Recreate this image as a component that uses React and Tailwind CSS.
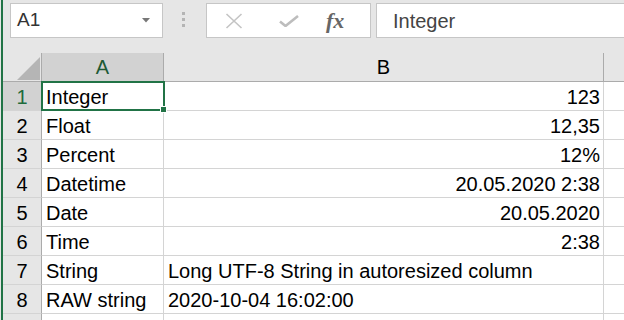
import React from 'react';

const FONT = "font-['Liberation_Sans',Arial,sans-serif]";

const rows = [
  ['1', 'Integer', '123', true],
  ['2', 'Float', '12,35', true],
  ['3', 'Percent', '12%', true],
  ['4', 'Datetime', '20.05.2020 2:38', true],
  ['5', 'Date', '20.05.2020', true],
  ['6', 'Time', '2:38', true],
  ['7', 'String', 'Long UTF-8 String in autoresized column', false],
  ['8', 'RAW string', '2020-10-04 16:02:00', false],
  ['', '', '', false],
];

function Toolbar() {
  return (
    <div className="h-[53px] shrink-0 pt-[3px] flex items-start">
      {/* name box */}
      <div className="ml-[7px] w-[153px] h-[35px] bg-white border border-[#c6c6c6] flex items-center justify-between pl-[6px] pr-[12px]">
        <span className="text-[19px] text-[#333]">A1</span>
        <svg width="8" height="5" viewBox="0 0 8 5">
          <path d="M0 0H8L4 4.5Z" fill="#777" />
        </svg>
      </div>

      {/* grip dots */}
      <div className="ml-[19px] mt-[9px] flex flex-col gap-[3px]">
        <div className="w-[3px] h-[3px] bg-[#b4b4b4]" />
        <div className="w-[3px] h-[3px] bg-[#b4b4b4]" />
        <div className="w-[3px] h-[3px] bg-[#b4b4b4]" />
      </div>

      {/* cancel / enter / fx */}
      <div className="ml-[21px] w-[165px] h-[35px] bg-white border border-[#c6c6c6] flex items-center">
        <svg className="ml-[18px]" width="18" height="16" viewBox="0 0 18 16">
          <path d="M1.5 1 16.5 15M16.5 1 1.5 15" stroke="#c4c4c4" strokeWidth="1.6" />
        </svg>
        <svg className="ml-[36px]" width="20" height="12" viewBox="0 0 20 12">
          <path d="M1 6.5 6.5 11 19 1" stroke="#bdbdbd" strokeWidth="2.6" fill="none" />
        </svg>
        <span className="ml-[27px] font-['Liberation_Serif',serif] italic font-bold text-[22px] text-[#666] leading-none">
          fx
        </span>
      </div>

      {/* formula input */}
      <div className="ml-[5px] flex-1 h-[35px] bg-white border border-[#c6c6c6] border-r-0 flex items-center pl-[16px]">
        <span className="text-[20px] text-[#444]">Integer</span>
      </div>
    </div>
  );
}

export default function App() {
  return (
    <div className={`w-[624px] h-[320px] overflow-hidden bg-[#e6e6e6] flex pl-px ${FONT}`}>
      <div className="w-[2px] h-full shrink-0 bg-[#217346]" />
      <div className="flex-1 flex flex-col">
        <Toolbar />

        <div className="relative shrink-0 grid grid-cols-[39px_122px_440px_1fr] text-[20px] leading-[20px] text-black">
          {/* header row */}
          <div className="h-[29px] border-b border-r border-[#ababab] flex items-end justify-end pr-px pb-px">
            <svg width="23" height="23" viewBox="0 0 23 23">
              <path d="M23 0V23H0Z" fill="#b5b5b5" />
            </svg>
          </div>
          <div className="h-[29px] bg-[#d2d2d2] border-b border-r border-[#ababab] flex items-end justify-center pb-[4px] text-[#1e5a35]">
            A
          </div>
          <div className="h-[29px] border-b border-r border-[#ababab] flex items-end justify-center pb-[4px]">
            B
          </div>
          <div className="h-[29px] border-b border-[#ababab]" />

          {rows.map(([num, label, value, right], i) => (
            <React.Fragment key={i}>
              <div
                className={`h-[29px] border-b border-b-[#d4d4d4] border-r border-r-[#ababab] flex items-end justify-center pb-[3px] ${
                  i === 0 ? 'bg-[#d2d2d2] text-[#1e6b3c]' : ''
                }`}
              >
                {num}
              </div>
              <div className="h-[29px] bg-white border-b border-r border-[#d4d4d4] flex items-end pl-[4px] pb-[3px] whitespace-nowrap">
                {label}
              </div>
              <div
                className={`h-[29px] bg-white border-b border-r border-[#d4d4d4] flex items-end pb-[3px] whitespace-nowrap ${
                  right ? 'justify-end pr-[3px]' : 'pl-[4px]'
                }`}
              >
                {value}
              </div>
              <div className="h-[29px] bg-white border-b border-[#d4d4d4]" />
            </React.Fragment>
          ))}

          {/* active cell A1 */}
          <div className="absolute left-[38px] top-[28px] w-[124px] h-[30px] border-2 border-[#217346] pointer-events-none" />
          <div className="absolute left-[157px] top-[53px] w-[7px] h-[7px] bg-[#217346] border border-white pointer-events-none" />
        </div>
      </div>
    </div>
  );
}
